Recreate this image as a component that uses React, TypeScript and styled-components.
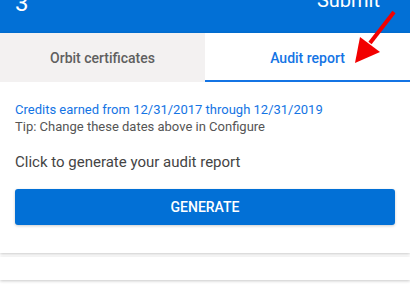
import React from "react";
import styled, { createGlobalStyle } from "styled-components";

const GlobalStyle = createGlobalStyle`
  html, body {
    margin: 0;
    padding: 0;
    background: #ffffff;
    font-family: Roboto, "Liberation Sans", Arial, sans-serif;
    overflow: hidden;
  }
`;

const Page = styled.div`
  width: 410px;
  height: 284px;
  position: relative;
  overflow: hidden;
`;

const Header = styled.div`
  height: 33px;
  background: #0270d6;
  color: #ffffff;
  display: flex;
  justify-content: space-between;
  align-items: flex-start;
  padding: 0 30px 0 15px;
  overflow: hidden;
`;

const StepNumber = styled.div`
  font-size: 24px;
  line-height: 24px;
  margin-top: -9px;
`;

const SubmitLabel = styled.div`
  font-size: 20px;
  line-height: 20px;
  margin-top: -10px;
`;

const Card = styled.div`
  background: #ffffff;
  box-shadow: 0 1px 3px rgba(0, 0, 0, 0.22);
`;

const Tabs = styled.div`
  display: grid;
  grid-template-columns: 205px 1fr;
  height: 49px;
`;

const Tab = styled.div<{ $active?: boolean }>`
  display: flex;
  align-items: center;
  justify-content: center;
  font-size: 14px;
  font-weight: 500;
  box-sizing: border-box;
  background: ${(p) => (p.$active ? "#ffffff" : "#f3f1f1")};
  color: ${(p) => (p.$active ? "#1474e4" : "#5f5f5f")};
  border-bottom: 2px solid ${(p) => (p.$active ? "#1474e4" : "transparent")};
  padding-top: 2px;
`;

const Body = styled.div`
  padding: 19px 15px 28px;
`;

const Credits = styled.div`
  font-size: 13px;
  line-height: 17px;
  color: #1474e4;
`;

const Tip = styled.div`
  font-size: 13px;
  line-height: 17px;
  color: #555555;
`;

const Prompt = styled.div`
  margin: 17px 0;
  font-size: 15px;
  line-height: 20px;
  color: #444444;
`;

const Button = styled.button`
  display: block;
  width: 100%;
  height: 36px;
  border: none;
  border-radius: 3px;
  background: #0270d6;
  color: #ffffff;
  font-family: inherit;
  font-size: 14px;
  font-weight: 500;
  box-shadow: 0 1px 3px rgba(0, 0, 0, 0.2);
  cursor: pointer;
`;

const NextCard = styled(Card)`
  height: 23px;
  margin-top: 4px;
`;

const Arrow = styled.svg`
  position: absolute;
  left: 340px;
  top: 0;
`;

export default function App() {
  return (
    <Page>
      <GlobalStyle />
      <Header>
        <StepNumber>3</StepNumber>
        <SubmitLabel>Submit</SubmitLabel>
      </Header>
      <Card>
        <Tabs>
          <Tab>Orbit certificates</Tab>
          <Tab $active>Audit report</Tab>
        </Tabs>
        <Body>
          <Credits>Credits earned from 12/31/2017 through 12/31/2019</Credits>
          <Tip>Tip: Change these dates above in Configure</Tip>
          <Prompt>Click to generate your audit report</Prompt>
          <Button>GENERATE</Button>
        </Body>
      </Card>
      <NextCard />
      <Arrow width="70" height="70" viewBox="0 0 70 70">
        <line x1="54" y1="12" x2="30" y2="43" stroke="#f20000" strokeWidth="4" />
        <polygon points="15,63 20,37 40,52" fill="#f20000" />
      </Arrow>
    </Page>
  );
}
